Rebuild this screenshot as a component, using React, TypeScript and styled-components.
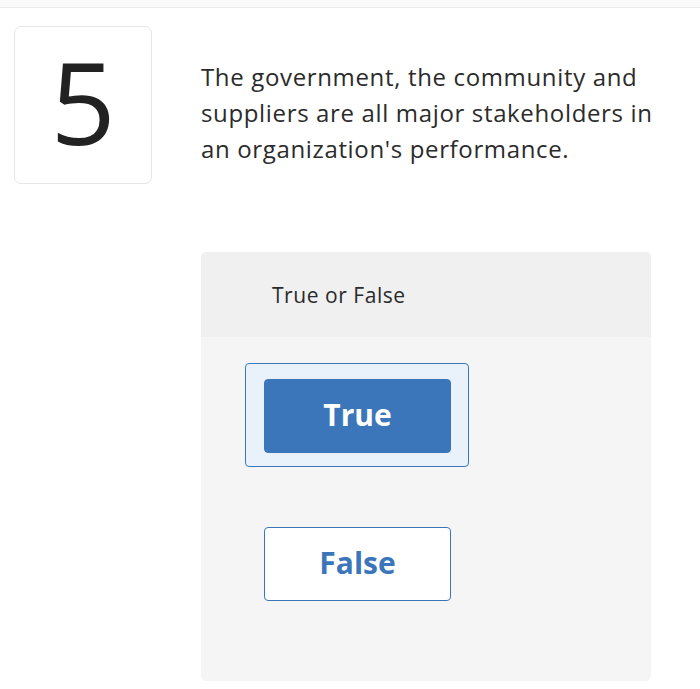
import React from "react";
import styled, { createGlobalStyle } from "styled-components";

const Global = createGlobalStyle`
  html, body { margin: 0; padding: 0; background: #ffffff; }
  body { font-family: "Open Sans", "Noto Sans", sans-serif; color: #2a2a2a; }
`;

const TopStrip = styled.div`
  height: 7px;
  background: #fafafa;
  border-bottom: 1px solid #ebebeb;
`;

const QuestionRow = styled.div`
  display: flex;
  align-items: flex-start;
  padding: 18px 0 0 14px;
  gap: 49px;
`;

const NumberBox = styled.div`
  width: 136px;
  height: 156px;
  box-sizing: content-box;
  border: 1px solid #e6e6e6;
  border-radius: 7px;
  display: flex;
  align-items: center;
  justify-content: center;
  font-size: 114px;
  font-weight: 400;
  color: #222;
  line-height: 1;
  flex-shrink: 0;
`;

const Digit = styled.span`
  display: block;
  margin-top: -8px;
`;

const QuestionText = styled.p`
  margin: 33px 0 0 0;
  width: 452px;
  font-size: 24px;
  line-height: 36px;
  letter-spacing: 0.65px;
  color: #2b2b2b;
`;

const Card = styled.div`
  margin: 68px 0 0 201px;
  width: 450px;
  height: 429px;
  border-radius: 5px;
  overflow: hidden;
  background: #f5f5f5;
`;

const CardHeader = styled.div`
  height: 85px;
  background: #f0f0f0;
  display: flex;
  align-items: center;
  padding-left: 71px;
  font-size: 21px;
  letter-spacing: 0.55px;
  color: #2a2a2a;
`;

const Options = styled.div`
  display: flex;
  flex-direction: column;
  align-items: flex-start;
  gap: 44px;
  padding: 26px 0 0 44px;
`;

const OptionWrap = styled.div<{ $selected?: boolean }>`
  width: 222px;
  height: 102px;
  border: 1px solid ${(p) => (p.$selected ? "#3d78ba" : "transparent")};
  border-radius: 4px;
  background: ${(p) => (p.$selected ? "#e9f2fb" : "transparent")};
  display: flex;
  align-items: flex-start;
`;

const OptionButton = styled.button<{ $selected?: boolean }>`
  margin: 15px 0 0 18px;
  width: 187px;
  height: 74px;
  box-sizing: border-box;
  border-radius: 4px;
  border: 1.5px solid #3a76b9;
  background: ${(p) => (p.$selected ? "#3a76b9" : "#ffffff")};
  color: ${(p) => (p.$selected ? "#ffffff" : "#3a76b9")};
  font-family: "Open Sans", "Noto Sans", sans-serif;
  font-size: 30px;
  font-weight: 700;
  cursor: pointer;
  padding: 0 0 3px 0;
`;

export default function App() {
  return (
    <>
      <Global />
      <TopStrip />
      <QuestionRow>
        <NumberBox>
          <Digit>5</Digit>
        </NumberBox>
        <QuestionText>
          The government, the community and suppliers are all major stakeholders in an organization's performance.
        </QuestionText>
      </QuestionRow>
      <Card>
        <CardHeader>True or False</CardHeader>
        <Options>
          <OptionWrap $selected>
            <OptionButton $selected>True</OptionButton>
          </OptionWrap>
          <OptionWrap>
            <OptionButton>False</OptionButton>
          </OptionWrap>
        </Options>
      </Card>
    </>
  );
}
